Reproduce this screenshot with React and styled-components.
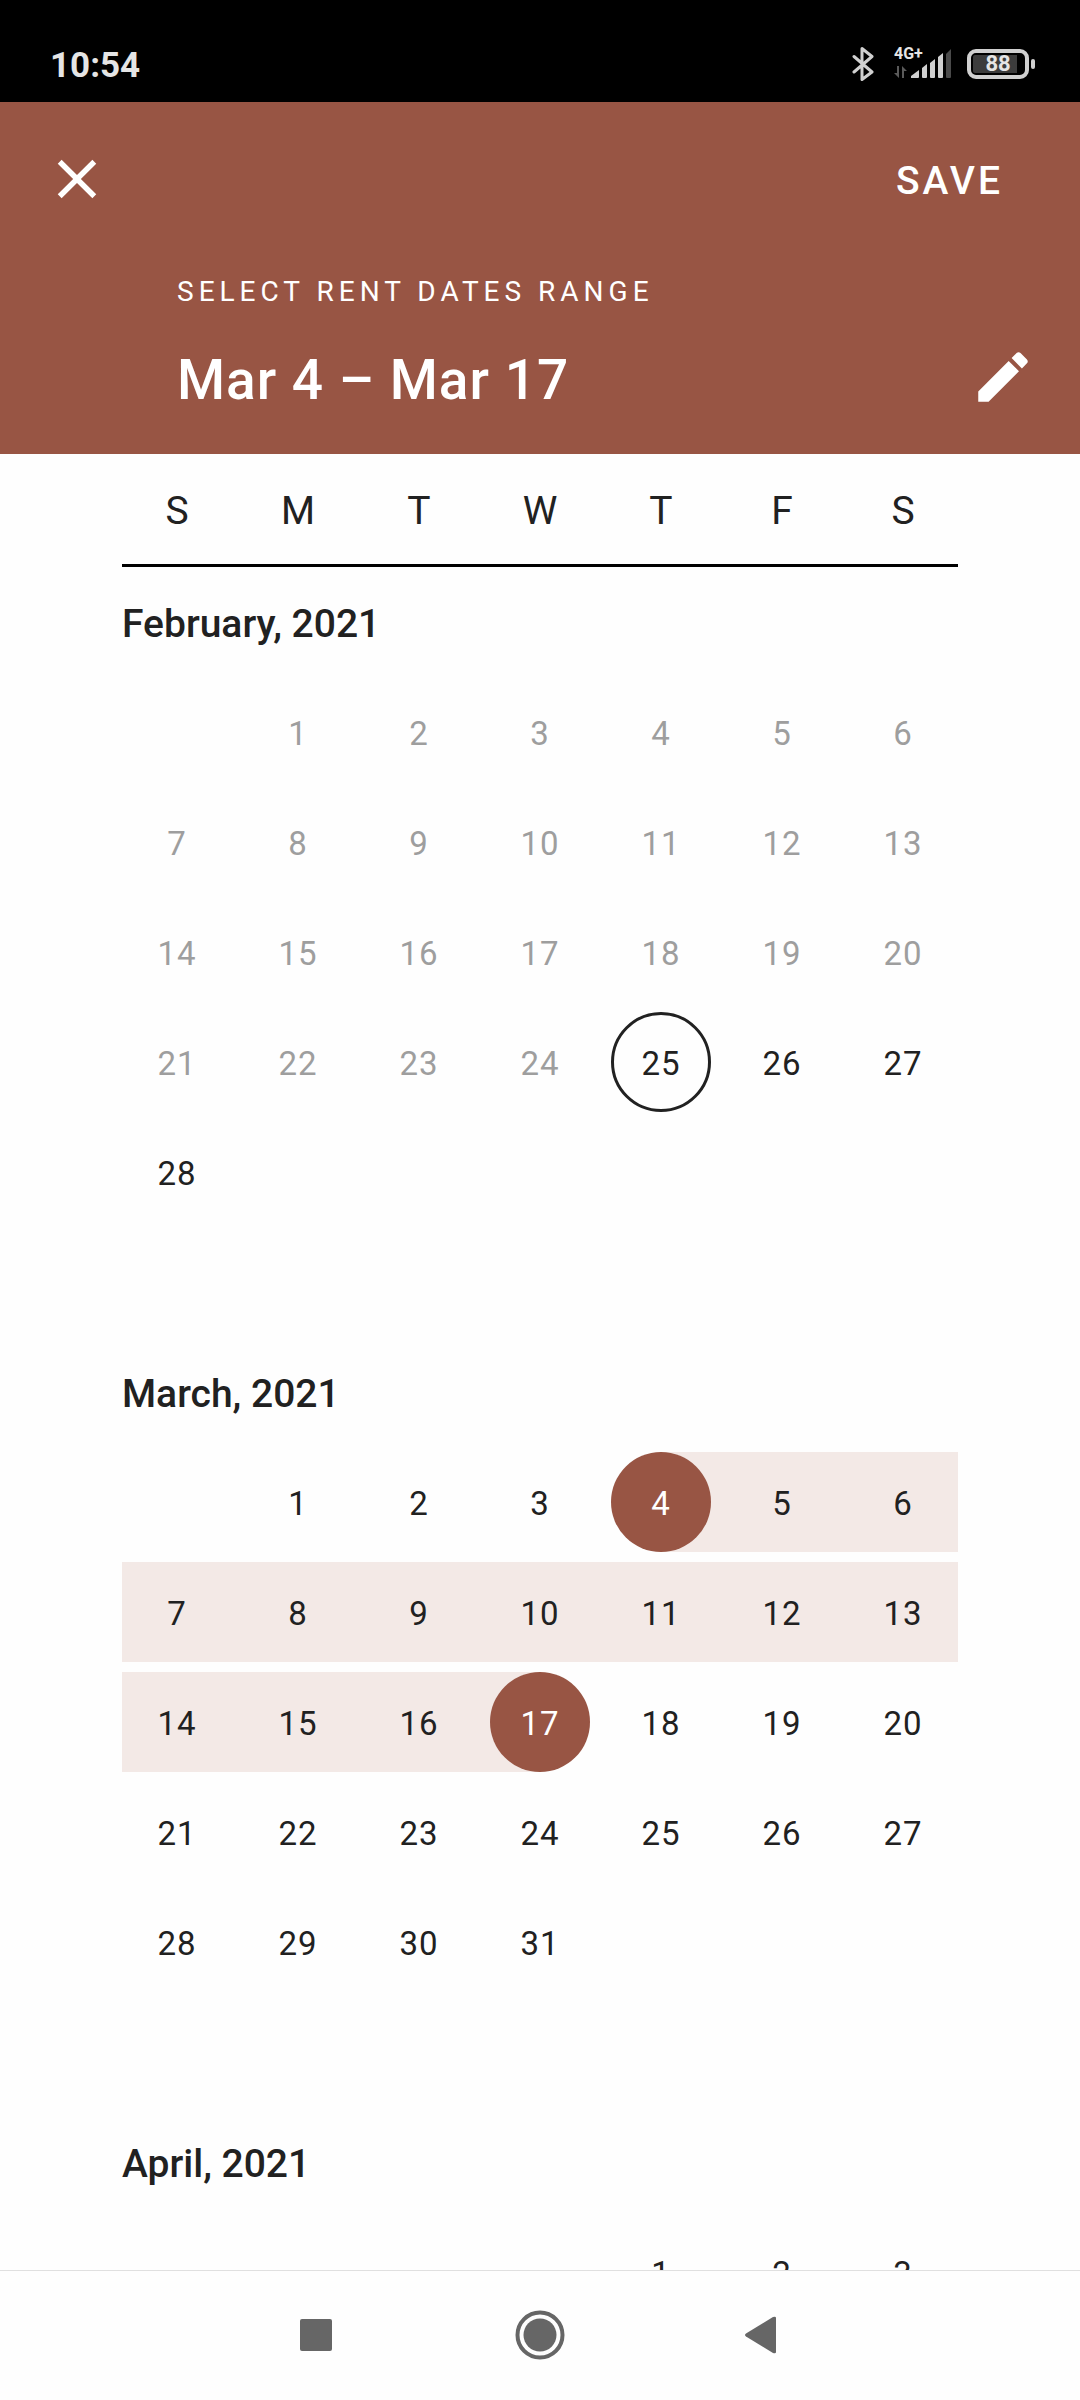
import React from "react";
import styled, { createGlobalStyle } from "styled-components";

const color = {
  brand: "#985544",
  range: "#f3e9e6",
  ink: "#212121",
  muted: "#9e9e9e",
  status: "#e5e5e5",
  glyph: "#d0d0d0",
  dim: "#4a4a4a",
  nav: "#666666",
};

const GlobalStyle = createGlobalStyle`
  * { box-sizing: border-box; }
  html, body { margin: 0; padding: 0; background: #fefefe; }
  body { font-family: Roboto, "Noto Sans", sans-serif; color: ${color.ink}; }
  button { font: inherit; color: inherit; background: none; border: 0; padding: 0; margin: 0; cursor: pointer; }
  svg { display: block; }
`;

const Screen = styled.div`
  display: flex;
  flex-direction: column;
  height: 100vh;
  overflow: hidden;
`;

const StatusBar = styled.div`
  display: flex;
  align-items: center;
  justify-content: space-between;
  flex: none;
  height: 102px;
  padding: 26px 45px 0 50px;
  background: #000;
  color: ${color.status};
`;

const Clock = styled.time`
  padding-top: 4px;
  font-size: 35px;
  font-weight: 700;
  line-height: 40px;
`;

const StatusIcons = styled.div`
  display: flex;
  align-items: center;
`;

const SignalSlot = styled.div`
  margin: 0 16px 0 20px;
`;

const Battery = styled.div`
  display: flex;
  align-items: center;
  gap: 2px;
`;

const BatteryBody = styled.div`
  width: 62px;
  height: 30px;
  padding: 2px;
  border: 4px solid ${color.glyph};
  border-radius: 9px;
`;

const BatteryFill = styled.div`
  display: flex;
  align-items: center;
  justify-content: center;
  height: 18px;
  border-radius: 2px;
  background: linear-gradient(to right, #3c3c3c ${(p) => p.$level}%, transparent ${(p) => p.$level}%);
  font-size: 22px;
  font-weight: 700;
  line-height: 18px;
`;

const BatteryTip = styled.div`
  width: 4px;
  height: 10px;
  border-radius: 2px;
  background: ${color.glyph};
`;

const Header = styled.header`
  flex: none;
  padding-bottom: 38px;
  background: ${color.brand};
  color: #fff;
`;

const ActionRow = styled.div`
  display: flex;
  align-items: center;
  justify-content: space-between;
  height: 154px;
  padding: 0 44px;
`;

const SaveButton = styled.button`
  padding: 4px 33px 0;
  font-size: 39px;
  font-weight: 500;
  line-height: 66px;
  letter-spacing: 3px;
`;

const IconButton = styled.button`
  flex: none;
  width: 66px;
  height: 66px;
`;

const Overline = styled.p`
  margin: 20px 0 36px;
  padding: 0 177px;
  font-size: 28px;
  line-height: 32px;
  letter-spacing: 5px;
  text-transform: uppercase;
  white-space: nowrap;
`;

const SelectionRow = styled.div`
  display: flex;
  align-items: flex-start;
  justify-content: space-between;
  padding: 0 44px 0 177px;
`;

const Selection = styled.h1`
  margin: 0;
  font-size: 55px;
  font-weight: 500;
  line-height: 72px;
  letter-spacing: 1px;
`;

const Weekdays = styled.div`
  display: grid;
  grid-template-columns: repeat(7, 1fr);
  column-gap: 11px;
  flex: none;
  margin: 0 122px;
  border-bottom: 3px solid #000;
`;

const Weekday = styled.div`
  padding-top: 4px;
  font-size: 39px;
  line-height: 106px;
  text-align: center;
`;

const MonthList = styled.main`
  display: flex;
  flex-direction: column;
  gap: 120px;
  flex: 1;
  min-height: 0;
  padding: 5px 122px;
  overflow-y: auto;
  scrollbar-width: none;
`;

const MonthSection = styled.section`
  display: flex;
  flex-direction: column;
  gap: 10px;
`;

const MonthTitle = styled.h2`
  margin: 0;
  padding-top: 4px;
  font-size: 39px;
  font-weight: 500;
  line-height: 96px;
`;

const Week = styled.div`
  display: grid;
  grid-template-columns: repeat(7, 1fr);
  grid-template-rows: 100px;
  column-gap: 11px;
  justify-items: center;
`;

const RangeBand = styled.div`
  grid-row: 1;
  grid-column: ${(p) => p.$from} / ${(p) => p.$to + 1};
  justify-self: stretch;
  margin-left: ${(p) => (p.$opens ? "55px" : 0)};
  margin-right: ${(p) => (p.$closes ? "55px" : 0)};
  background: ${color.range};
`;

const Day = styled.button`
  grid-row: 1;
  grid-column: ${(p) => p.$column};
  width: 100px;
  padding-top: 4px;
  border-radius: 50%;
  border: ${(p) => (p.$today ? `3px solid ${color.ink}` : 0)};
  background: ${(p) => (p.$selected ? color.brand : "none")};
  color: ${(p) => (p.$selected ? "#fff" : color.ink)};
  font-size: 33px;
  line-height: 40px;
  letter-spacing: 1px;

  &:disabled {
    color: ${color.muted};
    cursor: default;
  }
`;

const NavBar = styled.nav`
  display: flex;
  justify-content: center;
  flex: none;
  height: 130px;
  padding-bottom: 1px;
  border-top: 1px solid #e0e0e0;
`;

const NavButton = styled.button`
  display: flex;
  align-items: center;
  justify-content: center;
  width: 224px;
`;

const WEEKDAYS = [
  ["S", "Sunday"],
  ["M", "Monday"],
  ["T", "Tuesday"],
  ["W", "Wednesday"],
  ["T", "Thursday"],
  ["F", "Friday"],
  ["S", "Saturday"],
];

const MONTHS = [
  { name: "February", offset: 1, days: 28, today: 25 },
  { name: "March", offset: 1, days: 31, range: [4, 17] },
  { name: "April", offset: 4, days: 3 },
];

function toWeeks({ offset, days }) {
  const weeks = [];
  for (let day = 1; day <= days; day += 1) {
    const slot = offset + day - 1;
    const index = Math.floor(slot / 7);
    if (!weeks[index]) weeks[index] = [];
    weeks[index].push({ day, column: (slot % 7) + 1 });
  }
  return weeks;
}

function WeekRow({ week, month }) {
  const [start, end] = month.range || [];
  const covered = week.filter(({ day }) => day >= start && day <= end);
  const first = covered[0];
  const last = covered[covered.length - 1];
  return (
    <Week>
      {first && (
        <RangeBand
          $from={first.column}
          $to={last.column}
          $opens={first.day === start}
          $closes={last.day === end}
        />
      )}
      {week.map(({ day, column }) => (
        <Day
          key={day}
          type="button"
          $column={column}
          $today={day === month.today}
          $selected={day === start || day === end}
          disabled={day < month.today}
          aria-label={`${month.name} ${day}, 2021`}
        >
          {day}
        </Day>
      ))}
    </Week>
  );
}

function Month({ month }) {
  return (
    <MonthSection>
      <MonthTitle>{month.name}, 2021</MonthTitle>
      {toWeeks(month).map((week) => (
        <WeekRow key={week[0].day} week={week} month={month} />
      ))}
    </MonthSection>
  );
}

function BluetoothIcon() {
  return (
    <svg width="22" height="36" viewBox="0 0 22 36" fill="none" stroke={color.glyph} strokeWidth="3" strokeLinejoin="round" strokeLinecap="round">
      <path d="M2 10.5 L20 26 L10 33.5 V2.5 L20 10.5 L2 26" />
    </svg>
  );
}

function SignalIcon() {
  return (
    <svg width="57" height="42" viewBox="0 -3 57 42" fill={color.glyph}>
      <text x="0" y="13" fontSize="16" fontWeight="700" fill={color.status}>4G+</text>
      <path d="M3 20 H5 V32 L0 27 H3 Z M8 20 L13 25 H10 V32 H8 Z" fill="#5a5a5a" />
      <path d="M17 32 V30 L25 24 V31 Q25 32 24 32 Z" />
      <path d="M28 22 L33 18 V31 Q33 32 32 32 H29 Q28 32 28 31 Z" />
      <path d="M36 17 L41 13 V31 Q41 32 40 32 H37 Q36 32 36 31 Z" />
      <path d="M44 11 L49 7 V31 Q49 32 48 32 H45 Q44 32 44 31 Z" />
      <path d="M52 8 L57 3 V31 Q57 32 56 32 H53 Q52 32 52 31 Z" fill={color.dim} />
    </svg>
  );
}

function CloseIcon() {
  return (
    <svg width="66" height="66" viewBox="0 0 24 24" fill="#fff">
      <path d="M19 6.41L17.59 5 12 10.59 6.41 5 5 6.41 10.59 12 5 17.59 6.41 19 12 13.41 17.59 19 19 17.59 13.41 12z" />
    </svg>
  );
}

function PencilIcon() {
  return (
    <svg width="66" height="66" viewBox="0 0 24 24" fill="#fff">
      <path d="M3 17.25V21h3.75L17.81 9.94l-3.75-3.75L3 17.25zM20.71 7.04c.39-.39.39-1.02 0-1.41l-2.34-2.34c-.39-.39-1.02-.39-1.41 0l-1.83 1.83 3.75 3.75 1.83-1.83z" />
    </svg>
  );
}

export default function App() {
  return (
    <>
      <GlobalStyle />
      <Screen>
        <StatusBar>
          <Clock>10:54</Clock>
          <StatusIcons>
            <BluetoothIcon />
            <SignalSlot>
              <SignalIcon />
            </SignalSlot>
            <Battery>
              <BatteryBody>
                <BatteryFill $level={88}>88</BatteryFill>
              </BatteryBody>
              <BatteryTip />
            </Battery>
          </StatusIcons>
        </StatusBar>

        <Header>
          <ActionRow>
            <IconButton type="button" aria-label="Close">
              <CloseIcon />
            </IconButton>
            <SaveButton type="button">SAVE</SaveButton>
          </ActionRow>
          <Overline>Select rent dates range</Overline>
          <SelectionRow>
            <Selection>Mar 4 – Mar 17</Selection>
            <IconButton type="button" aria-label="Edit dates">
              <PencilIcon />
            </IconButton>
          </SelectionRow>
        </Header>

        <Weekdays>
          {WEEKDAYS.map(([letter, name]) => (
            <Weekday key={name}>{letter}</Weekday>
          ))}
        </Weekdays>

        <MonthList>
          {MONTHS.map((month) => (
            <Month key={month.name} month={month} />
          ))}
        </MonthList>

        <NavBar>
          <NavButton type="button" aria-label="Recent apps">
            <svg width="32" height="32" viewBox="0 0 32 32" fill={color.nav}>
              <rect width="32" height="32" rx="2" />
            </svg>
          </NavButton>
          <NavButton type="button" aria-label="Home">
            <svg width="50" height="50" viewBox="0 0 50 50">
              <circle cx="25" cy="25" r="22.5" fill="none" stroke={color.nav} strokeWidth="4" />
              <circle cx="25" cy="25" r="16.5" fill={color.nav} />
            </svg>
          </NavButton>
          <NavButton type="button" aria-label="Back">
            <svg width="38" height="38" viewBox="0 0 38 38" fill={color.nav}>
              <path d="M1 17.5 L28 1 Q31 0 31 2 V36 Q31 38 28 37 L1 20.5 Q-1 19 1 17.5 Z" />
            </svg>
          </NavButton>
        </NavBar>
      </Screen>
    </>
  );
}
